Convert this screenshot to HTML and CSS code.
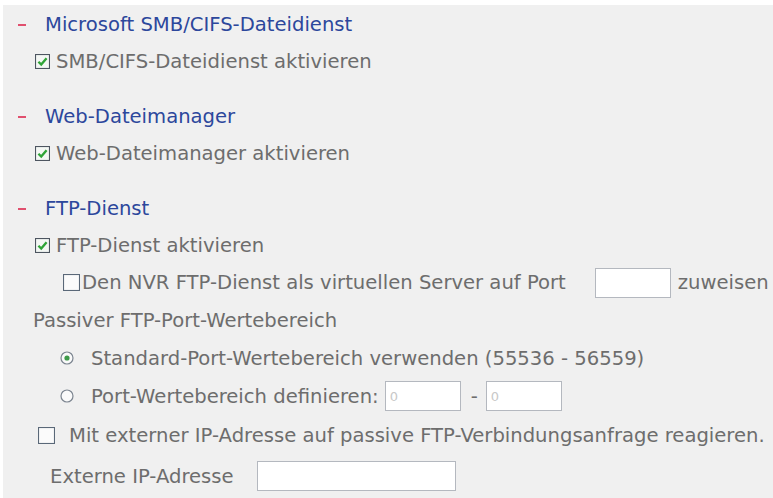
FILE: index.html
```html
<!DOCTYPE html>
<html lang="de">
<head>
    <meta charset="UTF-8">
    <title>Netzwerkdienste</title>
    <link rel="stylesheet" href="styles.css">
</head>
<body>

<div class="panel">
    <!-- SMB -->
    <section class="group">
        <h3 class="group-title"><span class="dash"></span>Microsoft SMB/CIFS-Dateidienst</h3>
        <label class="row">
            <svg class="cb" viewBox="0 0 14 14"><rect x="0.5" y="0.5" width="13" height="13" fill="#f4f7f4" stroke="#4d5560"/><path d="M3.2 7.2 L5.8 9.8 L10.8 3.9" fill="none" stroke="#2fa437" stroke-width="2.2"/></svg>
            SMB/CIFS-Dateidienst aktivieren
        </label>
    </section>

    <!-- Web-Dateimanager -->
    <section class="group">
        <h3 class="group-title"><span class="dash"></span>Web-Dateimanager</h3>
        <label class="row">
            <svg class="cb" viewBox="0 0 14 14"><rect x="0.5" y="0.5" width="13" height="13" fill="#f4f7f4" stroke="#4d5560"/><path d="M3.2 7.2 L5.8 9.8 L10.8 3.9" fill="none" stroke="#2fa437" stroke-width="2.2"/></svg>
            Web-Dateimanager aktivieren
        </label>
    </section>

    <!-- FTP -->
    <section class="group">
        <h3 class="group-title"><span class="dash"></span>FTP-Dienst</h3>
        <label class="row">
            <svg class="cb" viewBox="0 0 14 14"><rect x="0.5" y="0.5" width="13" height="13" fill="#f4f7f4" stroke="#4d5560"/><path d="M3.2 7.2 L5.8 9.8 L10.8 3.9" fill="none" stroke="#2fa437" stroke-width="2.2"/></svg>
            FTP-Dienst aktivieren
        </label>
        <div class="row sub">
            <svg class="cb cb-big" viewBox="0 0 16 16"><rect x="0.5" y="0.5" width="15" height="15" fill="#fbfbfb" stroke="#5a6878"/></svg>
            <span class="tight">Den NVR FTP-Dienst als virtuellen Server auf Port</span>
            <input class="field port" type="text">
            <span>zuweisen</span>
        </div>
        <div class="row label-row">Passiver FTP-Port-Wertebereich</div>
        <label class="row radio-row">
            <svg class="rb" viewBox="0 0 14 14"><circle cx="7" cy="7" r="6" fill="#fafafa" stroke="#7c8590" stroke-width="1.2"/><circle cx="7" cy="7" r="2.6" fill="#3f9a4a"/></svg>
            Standard-Port-Wertebereich verwenden (55536 - 56559)
        </label>
        <div class="row radio-row">
            <svg class="rb" viewBox="0 0 14 14"><circle cx="7" cy="7" r="6" fill="#fafafa" stroke="#7c8590" stroke-width="1.2"/></svg>
            <span>Port-Wertebereich definieren:</span>
            <input class="field range" type="text" placeholder="0">
            <span class="sep">-</span>
            <input class="field range" type="text" placeholder="0">
        </div>
        <label class="row ext-row">
            <svg class="cb cb-big" viewBox="0 0 16 16"><rect x="0.5" y="0.5" width="15" height="15" fill="#fbfbfb" stroke="#5a6878"/></svg>
            Mit externer IP-Adresse auf passive FTP-Verbindungsanfrage reagieren.
        </label>
        <div class="row ip-row">
            <span>Externe IP-Adresse</span>
            <input class="field ip" type="text">
        </div>
    </section>
</div>

</body>
</html>
```

FILE: styles.css
```css
body {
    margin: 0;
    background-color: #ffffff;
    font-family: "DejaVu Sans", Verdana, sans-serif;
    font-size: 19.6px;
    color: #6d6d6d;
}
.panel {
    margin: 5px 0 0 3px;
    background-color: #f0f0f0;
    height: 493px;
    overflow: hidden;
    padding-top: 1px;
}
.group {
    margin-bottom: 18px;
}
.group-title {
    margin: 0;
    height: 37px;
    display: flex;
    align-items: center;
    font-size: 19.6px;
    font-weight: normal;
    color: #2c479c;
    padding-left: 15px;
}
.dash {
    width: 8px;
    height: 2px;
    background-color: #e0506e;
    margin-right: 19px;
}
.row {
    height: 37px;
    display: flex;
    align-items: center;
    padding-left: 32px;
    white-space: nowrap;
}
.cb {
    flex: none;
    width: 15px;
    height: 15px;
    margin-right: 6px;
}
.cb-big {
    width: 17px;
    height: 17px;
}
.row.sub {
    padding-left: 60px;
}
.row.sub .cb {
    margin-right: 2px;
}
.tight {
    margin-right: 29px;
}
.label-row {
    height: 38px;
    padding-left: 30px;
}
.radio-row {
    height: 38px;
    padding-left: 57px;
}
.rb {
    flex: none;
    width: 14px;
    height: 14px;
    margin-right: 17px;
}
.ext-row {
    height: 41px;
    padding-left: 35px;
}
.ext-row .cb {
    margin-right: 14px;
}
.ip-row {
    height: 40px;
    padding-left: 47px;
}
.field {
    box-sizing: border-box;
    height: 30px;
    border: 1px solid #b4b8bf;
    background-color: #ffffff;
    font-family: "DejaVu Sans", sans-serif;
    font-size: 13px;
    padding: 2px 4px;
    outline: none;
}
.field::placeholder {
    color: #c8c8c8;
}
.port {
    width: 76px;
    margin-right: 7px;
}
.range {
    width: 76px;
    margin-left: 6px;
}
.sep {
    margin: 0 2px 0 10px;
}
.ip {
    width: 199px;
    margin-left: 23px;
}
```
